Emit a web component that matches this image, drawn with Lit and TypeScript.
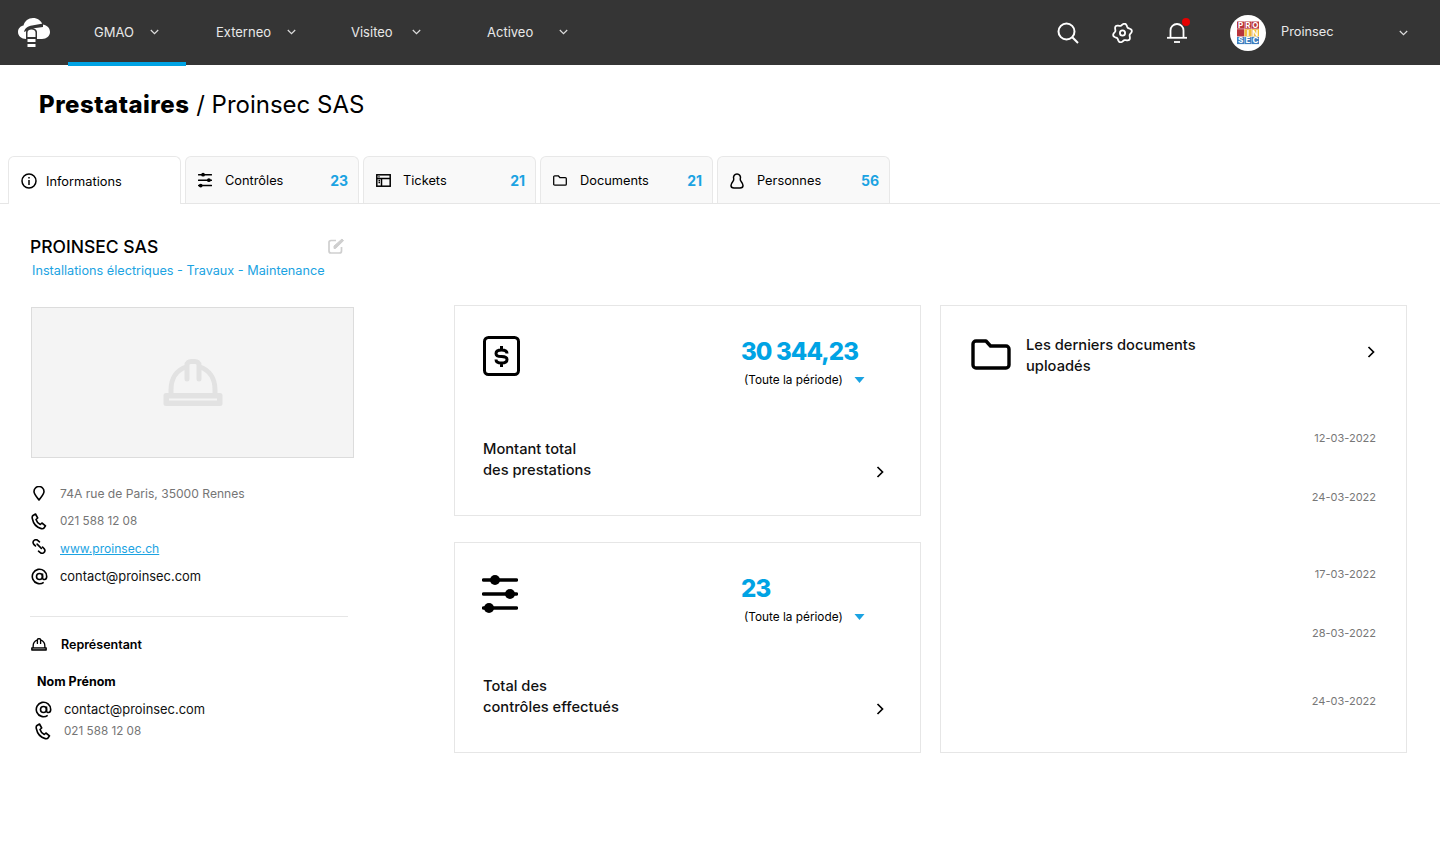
import { LitElement, html, css, svg } from 'lit';
import { customElement } from 'lit/decorators.js';

const chevronDown = html`<svg class="chev" width="9" height="6" viewBox="0 0 9 6" fill="none" stroke="#ddd" stroke-width="1.200"><path d="M.8 1l3.700 3.700L8.200 1" /></svg>`;
const chevronRight = html`<svg class="chev-right" width="8" height="12" viewBox="0 0 8 12" fill="none" stroke="#000" stroke-width="1.700"><path d="M1.500 1l5 5-5 5" /></svg>`;
const caret = html`<svg width="11" height="6" viewBox="0 0 11 6"><path d="M0.500 0h10L5.500 6z" fill="#1ba3e2" /></svg>`;

const sliders = (w: number, h: number, sw: number, r: number) => html`<svg width=${w} height=${h} viewBox="0 0 36 42" fill="none">
  <g stroke="#000" stroke-width=${sw} stroke-linecap="round"><path d="M1.500 7h33M1.500 21h33M1.500 35h33" /></g>
  <g fill="#000"><circle cx="13" cy="7" r=${r} /><circle cx="28" cy="21" r=${r} /><circle cx="7" cy="35" r=${r} /></g>
</svg>`;

const folder = (w: number, h: number, sw: number) => html`<svg width=${w} height=${h} viewBox="0 0 40 31" fill="none" stroke="#000" stroke-width=${sw} stroke-linejoin="round">
  <path d="M2 5a3 3 0 0 1 3-3h10l4.500 5H35a3 3 0 0 1 3 3v16a3 3 0 0 1-3 3H5a3 3 0 0 1-3-3z" />
</svg>`;

const phone = html`<svg width="16" height="17" viewBox="0 0 16 17" fill="none" stroke="#000" stroke-width="1.600" stroke-linejoin="round"><path d="M2 2.500L4.500 1l2.200 4-1.700 1.500c.6 2 2.200 4 4.300 5l1.600-1.500 3.600 2.800-1.500 2.200c-.5.700-1.500.9-2.700.6C6 14.500 2.300 10.500 1.300 5.500 1 4.200 1.300 3 2 2.500z" /></svg>`;
const at = html`<svg width="17" height="17" viewBox="0 0 17 17" fill="none" stroke="#000" stroke-width="1.600"><circle cx="8.500" cy="8.500" r="3" /><path d="M11.500 5.500v4.200c0 2.600 4.200 2.600 4.200-1.200a7.200 7.200 0 1 0-3 5.800" /></svg>`;
const pin = html`<svg width="12" height="15" viewBox="0 0 12 15" fill="none" stroke="#000" stroke-width="1.600" stroke-linejoin="round"><path d="M6 14C4 11 1 8.500 1 5.500a5 5 0 0 1 10 0C11 8.500 8 11 6 14z" /></svg>`;
const link = html`<svg class="link" width="16" height="15" viewBox="0 0 16 16" fill="none" stroke="#000" stroke-width="1.700" stroke-linecap="round"><path d="M8.500 3L7 1.800a3 3 0 0 0-5 3.200c.3.700 1 1.400 2.200 2.400" /><path d="M6 5.500l4.500 4.500" /><path d="M7.500 13L9 14.200a3 3 0 0 0 5-3.200c-.3-.7-1-1.400-2.200-2.400" /></svg>`;
const helmet = (w: number, h: number, color: string, strip: string) => html`<svg width=${w} height=${h} viewBox="0 0 60 48" fill="none">
  <path d="M8 38V31C8 19 14 11 23 8M37 8c9 3 15 11 15 23v7" stroke=${color} stroke-width="5" />
  <path d="M24 20V6c0-2 2-3.500 4-3.500h4c2 0 4 1.500 4 3.500v14" stroke=${color} stroke-width="5" stroke-linecap="round" />
  <rect x="0.500" y="34" width="59" height="13" rx="2.500" fill=${color} />
  <rect x="6" y="39.500" width="48" height="2" fill=${strip} />
</svg>`;

// outline of the settings cog, six soft lobes round the centre
const cogPath = (() => {
  const points: string[] = [];
  for (let i = 0; i < 72; i++) {
    const a = (i / 72) * Math.PI * 2;
    const r = 8.500 + 1.100 * Math.cos(6 * a + Math.PI / 2);
    points.push(`${(10.500 + r * Math.cos(a)).toFixed(2)} ${(10 + r * Math.sin(a)).toFixed(2)}`);
  }
  return `M${points.join('L')}z`;
})();

// avatar logo: three rows of small coloured squares, with real letters
const avatarRows = [
  { color: '#b8343a', letters: ['P', 'R', 'O'] },
  { color: '#f0b93a', letters: ['', 'I', 'N'] },
  { color: '#3f7fbf', letters: ['S', 'E', 'C'] },
];
const avatar = html`<svg width="36" height="36" viewBox="0 0 36 36">
  <circle cx="18" cy="18" r="18" fill="#fff" />
  ${avatarRows.map((row, y) =>
    row.letters.map((l, x) => {
      const cx = 7 + x * 7.400;
      const cy = 6.500 + y * 7.700;
      return svg`<rect x=${cx} y=${cy} width="7.200" height="7.200" fill=${l === '' ? '#b8343a' : row.color} />
        <text x=${cx + 3.600} y=${cy + 6.300} font-size="8" font-weight="700" text-anchor="middle" fill="#fff" font-family="Inter, sans-serif">${l}</text>`;
    })
  )}
</svg>`;

const NAV = [
  { label: 'GMAO', width: 122, labelWidth: 56 },
  { label: 'Externeo', width: 135, labelWidth: 71 },
  { label: 'Visiteo', width: 136, labelWidth: 61 },
  { label: 'Activeo', width: 136, labelWidth: 72 },
];

const TABS = [
  {
    label: 'Contrôles',
    count: '23',
    icon: sliders(14, 16.300, 3.800, 4.800),
  },
  {
    label: 'Tickets',
    count: '21',
    icon: html`<svg width="15" height="13" viewBox="0 0 15 13" fill="none" stroke="#000" stroke-width="1.500"><rect x="0.800" y="0.800" width="13.400" height="11.400" /><path d="M1 4.500h13M5.500 4.500V12" /><path d="M2.500 2.700h1M2.500 6.500h1.500M2.500 8.500h1.500" /></svg>`,
  },
  {
    label: 'Documents',
    count: '21',
    icon: folder(14, 11, 3.600),
  },
  {
    label: 'Personnes',
    count: '56',
    icon: html`<svg width="14" height="16" viewBox="0 0 14 16" fill="none" stroke="#000" stroke-width="1.500" stroke-linejoin="round"><path d="M7 1a3.500 3.500 0 0 0-3.300 4.700c.3 1-.1 1.900-1 3C1.800 9.800 1 11 1 12.500 1 14.200 2.300 15 4 15h6c1.700 0 3-.8 3-2.500 0-1.500-.8-2.700-1.700-3.800-.9-1.100-1.300-2-1-3A3.500 3.500 0 0 0 7 1z" /></svg>`,
  },
];

const DATES = [
  { date: '12-03-2022', top: 0 },
  { date: '24-03-2022', top: 39 },
  { date: '17-03-2022', top: 57 },
  { date: '28-03-2022', top: 39 },
  { date: '24-03-2022', top: 48 },
];

@customElement('app-root')
export class AppRoot extends LitElement {
  static styles = css`
    :host {
      display: block;
      min-height: 867px;
      background: #fff;
      font-family: Inter, 'Noto Sans', sans-serif;
      color: #000;
    }

    .nav {
      display: flex;
      align-items: stretch;
      height: 65px;
      background: #353535;
      color: #e8e8e8;
    }
    .logo {
      width: 50px;
      padding-left: 18px;
      display: flex;
      align-items: center;
      box-sizing: content-box;
    }
    .nav-item {
      display: flex;
      align-items: center;
      box-sizing: border-box;
      padding-left: 26px;
      font-size: 13px;
      margin-top: -1px;
    }
    .nav-item.active {
      position: relative;
    }
    .nav-item.active::after {
      content: '';
      position: absolute;
      left: 0;
      bottom: -1px;
      width: 118px;
      height: 4px;
      background: #00a3e4;
    }
    .nav-right {
      margin-left: auto;
      display: flex;
      align-items: center;
      padding-right: 32px;
    }
    .nav-icon {
      position: relative;
      display: flex;
      width: 22px;
      margin-right: 33px;
    }
    .dot {
      position: absolute;
      top: -4px;
      right: -1px;
      width: 8px;
      height: 8px;
      border-radius: 50%;
      background: #e60000;
    }
    .avatar {
      display: flex;
      margin-left: 8px;
    }
    .user {
      font-size: 12.800px;
      width: 118px;
      margin: -2px 0 0 15px;
    }

    h1 {
      margin: 0;
      padding: 25px 0 0 39px;
      height: 91px;
      box-sizing: border-box;
      font-size: 24px;
      line-height: 30px;
      font-weight: 400;
    }
    h1 b {
      font-weight: 800;
      letter-spacing: 0.500px;
    }

    .tabs {
      display: flex;
      gap: 4px;
      height: 48px;
      padding-left: 8px;
      box-sizing: border-box;
      border-bottom: 1px solid #e6e6e6;
    }
    .tab {
      display: flex;
      align-items: center;
      width: 173px;
      height: 47px;
      box-sizing: border-box;
      padding: 1px 10px 0 12px;
      background: #f9f9f9;
      border: 1px solid #e8e8e8;
      border-bottom: 0;
      border-radius: 6px 6px 0 0;
      font-size: 12.800px;
    }
    .tab:nth-child(2) {
      width: 174px;
    }
    .tab.active {
      height: 48px;
      background: #fff;
    }
    .tab-icon {
      display: flex;
      width: 27px;
      flex: none;
    }
    .tab.active .tab-icon {
      width: 25px;
    }
    .count {
      margin-left: auto;
      color: #1ba3e2;
      font-size: 14px;
      font-weight: 700;
    }

    .content {
      display: flex;
      align-items: flex-start;
      padding-left: 30px;
    }

    .side {
      width: 324px;
      margin-right: 100px;
      flex: none;
    }
    .side-head {
      display: flex;
      justify-content: space-between;
      align-items: center;
      width: 314px;
      height: 24px;
      margin-top: 31px;
    }
    .side-head svg {
      margin-top: -3px;
    }
    h2 {
      margin: 0;
      font-size: 17.500px;
      line-height: 24px;
      font-weight: 500;
    }
    .subtitle {
      margin: 3px 0 0 2px;
      font-size: 12.700px;
      line-height: 18px;
      color: #1ba3e2;
      white-space: nowrap;
    }
    .photo {
      display: flex;
      align-items: center;
      justify-content: center;
      width: 323px;
      height: 151px;
      margin: 27px 0 0 1px;
      box-sizing: border-box;
      background: #f4f4f4;
      border: 1px solid #dcdcdc;
    }
    .contacts {
      margin-top: 22px;
      padding-bottom: 26px;
      width: 318px;
      border-bottom: 1px solid #e6e6e6;
    }
    .row {
      display: flex;
      align-items: center;
      height: 27.500px;
      font-size: 12.100px;
      color: #757575;
    }
    .row-icon {
      display: flex;
      justify-content: center;
      width: 18px;
      margin-right: 12px;
      flex: none;
    }
    .row.dark {
      color: #111;
      font-size: 12.900px;
    }
    .row.tel {
      font-size: 11.700px;
    }
    .row a {
      color: #1ba3e2;
      text-decoration: underline;
    }
    .link {
      margin-top: -4px;
    }
    .rep {
      display: flex;
      align-items: center;
      height: 20px;
      margin-top: 17px;
      font-size: 12.500px;
      font-weight: 600;
    }
    .rep .row-icon {
      margin-right: 13px;
    }
    .name {
      margin: 18px 0 0 7px;
      font-size: 12.500px;
      line-height: 20px;
      font-weight: 700;
    }
    .sub-rows {
      margin: 6px 0 0 4px;
    }
    .sub-rows .row {
      height: 22px;
    }

    .stats {
      display: flex;
      flex-direction: column;
      gap: 26px;
      width: 467px;
      margin-top: 101px;
      margin-right: 19px;
      flex: none;
    }
    .card {
      box-sizing: border-box;
      height: 211px;
      padding: 30px 36px 0 28px;
      border: 1px solid #e6e6e6;
    }
    .card-top {
      display: flex;
      height: 94px;
    }
    .card-icon {
      display: flex;
      width: 258px;
      height: 40px;
      flex: none;
    }
    .card-icon.slim {
      margin-left: -1px;
      width: 259px;
    }
    .value {
      margin: 1px 0 0;
      color: #00a3e4;
      font-size: 24px;
      line-height: 30px;
      font-weight: 800;
      letter-spacing: -0.900px;
    }
    .period {
      display: flex;
      align-items: center;
      gap: 11px;
      margin: 4px 0 0 3px;
      font-size: 11.800px;
      line-height: 18px;
      white-space: nowrap;
    }
    .card-bottom {
      display: flex;
      justify-content: space-between;
      align-items: flex-end;
      margin-top: 9px;
    }
    .label {
      font-size: 14.700px;
      line-height: 21px;
      font-weight: 500;
      color: #111;
    }
    .chev-right {
      margin-bottom: 3px;
      flex: none;
    }

    .docs {
      box-sizing: border-box;
      width: 467px;
      height: 448px;
      margin-top: 101px;
      padding: 29px 30px 0 30px;
      border: 1px solid #e6e6e6;
    }
    .docs-head {
      display: flex;
      align-items: flex-start;
    }
    .docs-head svg:first-child {
      margin: 4px 15px 0 0;
      flex: none;
    }
    .docs-head .label {
      flex: 1;
    }
    .docs-head .chev-right {
      margin: 11px 1px 0 0;
    }
    .dates {
      margin-top: 51px;
      font-size: 11px;
      line-height: 20px;
      color: #777;
      text-align: right;
    }
  `;

  render() {
    return html`
      <header class="nav">
        <div class="logo">
          <svg width="32" height="30" viewBox="0 0 32 30">
            <path d="M8 21C3.500 21 0 18 0 14c0-3.500 2.500-6 5.500-6.500C6.500 3 10.500 0 15 0c4.500 0 8 2.500 9.500 6.500 4 .3 7.500 3.300 7.500 7.500 0 4-3.500 7-8 7z" fill="#fff" />
            <path d="M6 14C7 10 10 8 14 7.500L25 5.500v3.500L14 10.500" fill="#353535" />
            <path d="M8 30V14c0-2 2.500-4 5.500-4s5.500 2 5.500 4v16z" fill="#353535" />
            <path d="M9.500 19v-4.500c0-1.700 1.800-3 4-3s4 1.300 4 3V19zM9.500 21h8v3h-8zM9.500 26h8v3h-8z" fill="#fff" />
          </svg>
        </div>
        ${NAV.map(
          (item, i) => html`
            <div class="nav-item ${i === 0 ? 'active' : ''}" style="width:${item.width}px">
              <span style="width:${item.labelWidth}px">${item.label}</span>${chevronDown}
            </div>
          `
        )}
        <div class="nav-right">
          <span class="nav-icon">
            <svg width="22" height="22" viewBox="0 0 22 22" fill="none" stroke="#fff" stroke-width="2"><circle cx="9.500" cy="9.500" r="8" /><path d="M15.300 15.300l5.700 5.700" /></svg>
          </span>
          <span class="nav-icon">
            <svg width="21" height="20" viewBox="0 0 21 20" fill="none" stroke="#fff" stroke-width="1.800" stroke-linejoin="round"><path d=${cogPath} /><circle cx="10.500" cy="10" r="2.600" /></svg>
          </span>
          <span class="nav-icon">
            <svg width="20" height="21" viewBox="0 0 20 21" fill="none" stroke="#fff" stroke-width="1.800"><path d="M3.500 15.500V8.500a6.500 6.500 0 0 1 13 0v7" /><path d="M0 15.800h20" /><path d="M7 20h6" /></svg>
            <i class="dot"></i>
          </span>
          <span class="avatar">${avatar}</span>
          <span class="user">Proinsec</span>
          ${chevronDown}
        </div>
      </header>

      <h1><b>Prestataires</b> / Proinsec SAS</h1>

      <nav class="tabs">
        <div class="tab active">
          <span class="tab-icon">
            <svg width="16" height="16" viewBox="0 0 16 16" fill="none" stroke="#000" stroke-width="1.500"><circle cx="8" cy="8" r="7" /><path d="M8 7v5" /><path d="M8 4v1.500" /></svg>
          </span>
          Informations
        </div>
        ${TABS.map(
          (t) => html`
            <div class="tab">
              <span class="tab-icon">${t.icon}</span>
              ${t.label}
              <span class="count">${t.count}</span>
            </div>
          `
        )}
      </nav>

      <main class="content">
        <section class="side">
          <div class="side-head">
            <h2>PROINSEC SAS</h2>
            <svg width="16" height="16" viewBox="0 0 16 16" fill="none" stroke="#cfcfcf" stroke-width="1.700"><path d="M13.500 9v4a2 2 0 0 1-2 2H3a2 2 0 0 1-2-2V4.500a2 2 0 0 1 2-2h5" /><path d="M6 10.500V8l8-7 1.500 1.700-8 7.800z" fill="#cfcfcf" stroke-width="1" /></svg>
          </div>
          <div class="subtitle">Installations électriques - Travaux - Maintenance</div>
          <div class="photo">${helmet(60, 48, '#e2e2e2', '#f4f4f4')}</div>
          <div class="contacts">
            <div class="row"><span class="row-icon">${pin}</span>74A rue de Paris, 35000 Rennes</div>
            <div class="row tel"><span class="row-icon">${phone}</span>021 588 12 08</div>
            <div class="row"><span class="row-icon">${link}</span><a>www.proinsec.ch</a></div>
            <div class="row dark"><span class="row-icon">${at}</span>contact@proinsec.com</div>
          </div>
          <div class="rep">
            <span class="row-icon">${helmet(16, 13, '#000', '#fff')}</span>Représentant
          </div>
          <div class="name">Nom Prénom</div>
          <div class="sub-rows">
            <div class="row dark"><span class="row-icon">${at}</span>contact@proinsec.com</div>
            <div class="row tel"><span class="row-icon">${phone}</span>021 588 12 08</div>
          </div>
        </section>

        <section class="stats">
          <article class="card">
            <div class="card-top">
              <div class="card-icon">
                <svg width="37" height="40" viewBox="0 0 37 40" fill="none" stroke="#000" stroke-width="3"><rect x="1.500" y="1.500" width="34" height="37" rx="4" /><path d="M24 17.500c0-2-2-3.500-5.500-3.500S13 15.500 13 17.500s2.500 3 5.500 3 5.500 1 5.500 3-2 3.500-5.500 3.500-5.500-1.500-5.500-3.500M18.500 10v4M18.500 26.500V31" /></svg>
              </div>
              <div>
                <p class="value">30 344,23</p>
                <div class="period">(Toute la période) ${caret}</div>
              </div>
            </div>
            <div class="card-bottom">
              <div class="label">Montant total<br />des prestations</div>
              ${chevronRight}
            </div>
          </article>
          <article class="card">
            <div class="card-top">
              <div class="card-icon slim">${sliders(36, 42, 3.400, 5)}</div>
              <div>
                <p class="value">23</p>
                <div class="period">(Toute la période) ${caret}</div>
              </div>
            </div>
            <div class="card-bottom">
              <div class="label">Total des<br />contrôles effectués</div>
              ${chevronRight}
            </div>
          </article>
        </section>

        <section class="docs">
          <div class="docs-head">
            ${folder(40, 31, 3.400)}
            <div class="label">Les derniers documents<br />uploadés</div>
            ${chevronRight}
          </div>
          <div class="dates">
            ${DATES.map((d) => html`<div style="margin-top:${d.top}px">${d.date}</div>`)}
          </div>
        </section>
      </main>
    `;
  }
}
